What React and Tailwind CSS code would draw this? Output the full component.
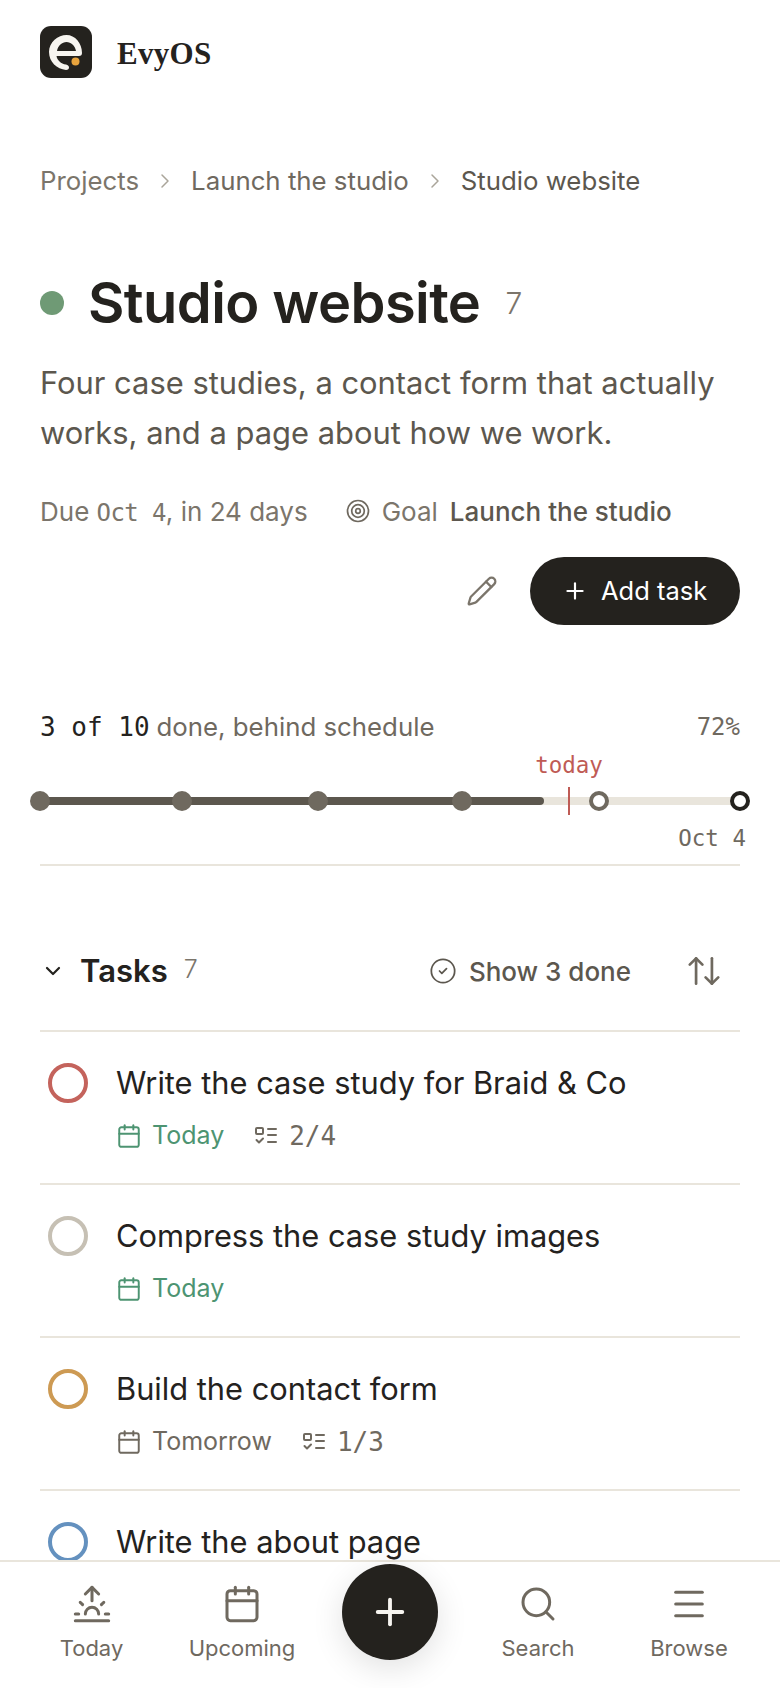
import { ArrowUpDown, Calendar, ChevronDown, ChevronRight, CircleCheck, Menu, Pencil, Plus, Search, Sunrise } from 'lucide-react';

const Logo = () => (
    <svg className="w-[52px] h-[52px] shrink-0" viewBox="0 0 52 52">
        <rect width="52" height="52" rx="11" fill="#24221e" />
        <path fillRule="evenodd" fill="#f7f5f0" d="M26.5 9C18 9 9 16 9 26c0 10 8 17 17 18 2 0 3-1 3-2.500S28 39 26 38.500C21 38 17 34 16.500 30H39c2 0 3-1 3-3C42 17 35 9 26.500 9zM17 25c1-5.500 5-9 9.500-9S35 19.500 36 25H17z" />
        <circle cx="35.500" cy="35.500" r="4" fill="#e8a33d" />
    </svg>
);

const Subtasks = ({ className }) => (
    <svg className={className} viewBox="0 0 24 24" fill="none" stroke="currentColor" strokeWidth="2" strokeLinecap="round" strokeLinejoin="round">
        <rect x="2" y="4" width="7" height="6" rx="1" />
        <path d="M2.500 16l2.500 2.500 4-4" />
        <path d="M14 5h8M14 11h8M14 18h8" />
    </svg>
);

const Rings = ({ className }) => (
    <svg className={className} viewBox="0 0 24 24" fill="none" stroke="currentColor" strokeWidth="1.700">
        <circle cx="12" cy="12" r="10.500" />
        <circle cx="12" cy="12" r="6.300" />
        <circle cx="12" cy="12" r="2.300" />
    </svg>
);

const TaskRow = ({ title, ring, date, dateClass, sub }) => (
    <div className="h-[153px] border-t-2 border-[#e9e5dc] flex gap-[28px] pl-2 pt-[31px] shrink-0">
        <div className={`w-10 h-10 rounded-full border-4 shrink-0 ${ring}`}></div>
        <div className="min-w-0">
            <div className="text-[30.800px] leading-[40px] text-[#24221e]">{title}</div>
            {date && (
                <div className="flex items-center mt-[13px] h-10 text-[25px]">
                    <Calendar className={`w-[26px] h-[26px] mr-[10px] ${dateClass}`} strokeWidth={1.800} />
                    <span className={dateClass}>{date}</span>
                    {sub && (
                        <span className="flex items-center ml-[30px] text-[#6f695f]">
                            <Subtasks className="w-6 h-6 mr-[11px]" />
                            <span className="text-[26px] font-['DejaVu_Sans_Mono',monospace] font-light">{sub}</span>
                        </span>
                    )}
                </div>
            )}
        </div>
    </div>
);

const NavItem = ({ icon: Icon, label, className }) => (
    <div className={`flex flex-col items-center shrink-0 ${className}`}>
        <Icon className="w-10 h-10 text-[#6f695f]" strokeWidth={1.800} />
        <span className="text-[22px] leading-7 mt-[10px] text-[#6f695f]">{label}</span>
    </div>
);

const App = () => {
    const dots = ['left-[40px]', 'left-[182px]', 'left-[318px]', 'left-[462px]'];

    return (
        <div className="relative w-[780px] h-[1688px] overflow-hidden bg-white font-['Inter',sans-serif]">
            <div className="px-10">
                {/* Header */}
                <div className="flex items-start gap-[25px] pt-[26px]">
                    <Logo />
                    <span className="text-[31px] leading-[56px] tracking-[0.3px] font-bold text-[#24221e] font-['Liberation_Serif',serif]">EvyOS</span>
                </div>

                {/* Breadcrumb */}
                <div className="flex items-center mt-[79px] h-10 text-[25.800px] text-[#6f695f]">
                    <span className="text-[#7b756b]">Projects</span>
                    <ChevronRight className="w-6 h-6 mx-[14px] text-[#aaa59a]" strokeWidth={1.500} />
                    <span>Launch the studio</span>
                    <ChevronRight className="w-6 h-6 mx-[14px] text-[#aaa59a]" strokeWidth={1.500} />
                    <span className="text-[#5c574e]">Studio website</span>
                </div>

                {/* Title */}
                <div className="flex items-center mt-[62px] h-[80px]">
                    <div className="w-6 h-6 rounded-full bg-[#6f9a75] mr-[24px]"></div>
                    <h1 className="text-[56px] leading-[80px] font-semibold tracking-[-0.560px] text-[#24221e]">Studio website</h1>
                    <span className="ml-[25px] text-[30px] text-[#7b756b] font-light">7</span>
                </div>

                <p className="mt-[15px] text-[30.900px] leading-[50px] text-[#5c574e]">
                    Four case studies, a contact form that actually works, and a page about how we work.
                </p>

                <div className="flex items-center mt-[35px] h-9 text-[26px] text-[#7b756b]">
                    <span>Due <span className="font-['DejaVu_Sans_Mono',monospace] text-[24px] tracking-[-0.600px]">Oct 4</span>, in 24 days</span>
                    <Rings className="w-6 h-6 ml-[38px] mr-[12px] text-[#6f695f]" />
                    <span>Goal</span>
                    <span className="ml-3 font-medium text-[#5c574e]">Launch the studio</span>
                </div>

                {/* Actions */}
                <div className="flex items-center justify-end mt-[28px] h-[68px]">
                    <Pencil className="w-8 h-8 text-[#7b756b] mr-[32px]" strokeWidth={1.700} />
                    <button className="flex items-center w-[210px] h-[68px] pl-[32px] rounded-full bg-[#24221e] text-white text-[25.500px]">
                        <Plus className="w-[26px] h-[26px] mr-[13px]" strokeWidth={2} />
                        Add task
                    </button>
                </div>

                {/* Progress */}
                <div className="flex items-center justify-between mt-[85px] h-[34px]">
                    <div className="flex items-center">
                        <span className="text-[26px] text-[#24221e] font-['DejaVu_Sans_Mono',monospace]">3 of 10</span>
                        <span className="ml-[7px] text-[25.800px] text-[#6f695f]">done, behind schedule</span>
                    </div>
                    <span className="text-[24px] text-[#6f695f] font-['DejaVu_Sans_Mono',monospace]">72%</span>
                </div>
            </div>

            {/* Timeline */}
            <div className="relative w-[780px] h-[116px] mt-[4px]">
                <div className="absolute left-[40px] top-[49px] w-[700px] h-2 rounded-full bg-[#e9e5dc]"></div>
                <div className="absolute left-[40px] top-[49px] w-[504px] h-2 rounded-full bg-[#5c574e]"></div>
                {dots.map((d) => (
                    <div key={d} className={`absolute ${d} top-[43px] w-5 h-5 -translate-x-1/2 rounded-full bg-[#6f695f]`}></div>
                ))}
                <div className="absolute left-[599px] top-[43px] w-5 h-5 -translate-x-1/2 rounded-full bg-white border-4 border-[#6f695f]"></div>
                <div className="absolute left-[740px] top-[43px] w-5 h-5 -translate-x-1/2 rounded-full bg-white border-4 border-[#24221e]"></div>
                <div className="absolute left-[568px] top-[39px] w-[2px] h-7 bg-[#bf5b55]"></div>
                <span className="absolute left-[569px] top-[3px] -translate-x-1/2 text-[22.500px] leading-7 text-[#bf5b55] font-['DejaVu_Sans_Mono',monospace]">today</span>
                <span className="absolute right-[34px] top-[76px] text-[22.500px] leading-7 text-[#6f695f] font-['DejaVu_Sans_Mono',monospace]">Oct 4</span>
            </div>

            <div className="px-10">
                <div className="border-t-2 border-[#e9e5dc]"></div>

                {/* Section head */}
                <div className="flex items-center h-[164px] pt-[46px]">
                    <ChevronDown className="w-6 h-6 ml-[1px] mr-[15px] text-[#24221e]" strokeWidth={2.200} />
                    <span className="text-[31px] font-semibold text-[#24221e]">Tasks</span>
                    <span className="ml-[16px] mb-[3px] text-[25px] text-[#7b756b] font-light">7</span>
                    <CircleCheck className="w-7 h-7 ml-auto text-[#5c574e]" strokeWidth={1.500} />
                    <span className="ml-[12px] text-[26px] font-[450] text-[#5c574e]">Show 3 done</span>
                    <ArrowUpDown className="w-[38px] h-[38px] ml-[54px] mr-[17px] text-[#6f695f]" strokeWidth={1.700} />
                </div>

                <TaskRow title="Write the case study for Braid & Co" ring="border-[#c4635c]" date="Today" dateClass="text-[#4d9472]" sub="2/4" />
                <TaskRow title="Compress the case study images" ring="border-[#c6c0b4]" date="Today" dateClass="text-[#4d9472]" />
                <TaskRow title="Build the contact form" ring="border-[#cd9a53]" date="Tomorrow" dateClass="text-[#6f695f]" sub="1/3" />
                <TaskRow title="Write the about page" ring="border-[#6491bf]" />
            </div>

            {/* Bottom nav */}
            <div className="absolute left-0 right-0 bottom-0 h-[128px] bg-white border-t-2 border-[#e9e5dc] flex items-start pt-[22px]">
                <NavItem icon={Sunrise} label="Today" className="w-[91px] ml-[46px]" />
                <NavItem icon={Calendar} label="Upcoming" className="w-[110px] ml-[50px]" />
                <div className="w-24 h-24 -mt-[20px] ml-[45px] rounded-full bg-[#24221e] flex items-center justify-center shadow-[0_8px_32px_rgba(0,0,0,0.12)] shrink-0">
                    <Plus className="w-[42px] h-[42px] text-[#f7f5f0]" strokeWidth={2.200} />
                </div>
                <NavItem icon={Search} label="Search" className="w-20 ml-[60px]" />
                <NavItem icon={Menu} label="Browse" className="w-20 ml-[71px]" />
            </div>
        </div>
    );
};

export default App;
